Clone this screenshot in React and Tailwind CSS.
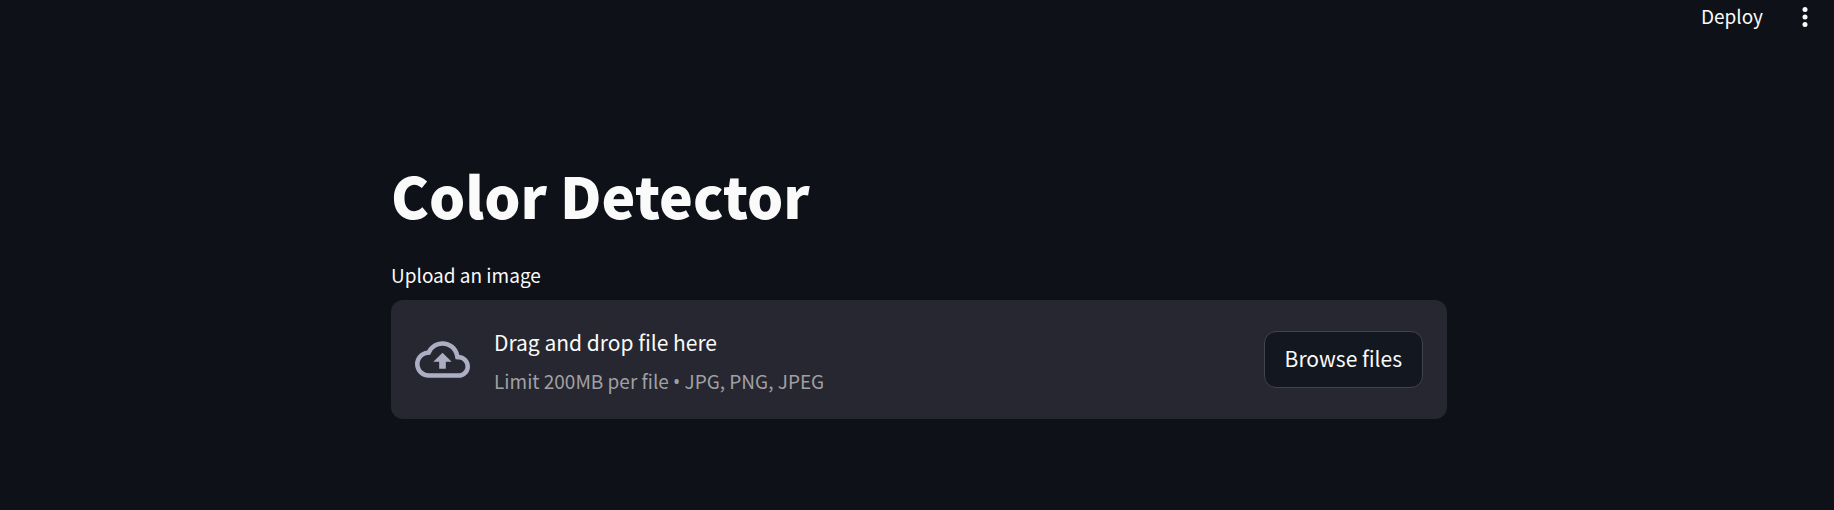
function MoreIcon() {
  return (
    <svg viewBox="0 0 24 24" className="size-[30px]" fill="currentColor" aria-hidden="true">
      <circle cx="12" cy="6" r="2" />
      <circle cx="12" cy="12" r="2" />
      <circle cx="12" cy="18" r="2" />
    </svg>
  );
}

function CloudUploadIcon() {
  return (
    <svg viewBox="0 0 24 24" className="size-[55px] shrink-0 text-[#acafc4]" fill="currentColor" aria-hidden="true">
      <path d="M19.35 10.04A7.49 7.49 0 0012 4C9.11 4 6.6 5.64 5.35 8.04A5.994 5.994 0 000 14c0 3.31 2.69 6 6 6h13c2.76 0 5-2.24 5-5 0-2.64-2.05-4.78-4.65-4.96zM19 18H6c-2.21 0-4-1.79-4-4 0-2.05 1.53-3.76 3.56-3.97l1.07-.11.5-.95A5.469 5.469 0 0112 6c2.62 0 4.88 1.86 5.39 4.43l.3 1.5 1.53.11A2.98 2.98 0 0122 15c0 1.65-1.35 3-3 3zM8 13h2.55v3h2.9v-3H16l-4-4z" />
    </svg>
  );
}

function Header() {
  return (
    <header className="flex items-center justify-end gap-[23px] pr-3.5 pt-0.5">
      <button type="button" className="px-1 pb-0.5 text-[19px] leading-7">Deploy</button>
      <button type="button" aria-label="Main menu">
        <MoreIcon />
      </button>
    </header>
  );
}

function FileUploader() {
  return (
    <section className="flex flex-col gap-2.5">
      <span id="upload-label" className="text-[19px] leading-[30px]">Upload an image</span>
      <div
        role="group"
        aria-labelledby="upload-label"
        className="flex items-center gap-6 rounded-xl bg-[#262730] p-6"
      >
        <CloudUploadIcon />
        <div className="flex grow flex-col gap-[9px] pt-0.5">
          <span className="text-[21px] leading-8">Drag and drop file here</span>
          <span className="text-[19px] leading-7 text-[#a0a0a4]">
            Limit 200MB per file <span className="font-['Noto_Sans',sans-serif] leading-none">•</span> JPG, PNG, JPEG
          </span>
        </div>
        <button
          type="button"
          className="rounded-xl border border-[#41444c] bg-[#131720] px-5 pb-[13px] pt-2.5 text-[21px] leading-8"
        >
          Browse files
        </button>
      </div>
    </section>
  );
}

export default function App() {
  return (
    <div className="min-h-screen bg-[#0e1117] font-['Noto_Sans_CJK_SC','Noto_Sans',sans-serif] text-[#fafafa]">
      <Header />
      <main className="pb-20 pl-1 pt-[122px]">
        <div className="mx-auto w-full max-w-[1056px]">
          <h1 className="mb-[26px] text-[57px] font-black leading-20">Color Detector</h1>
          <FileUploader />
        </div>
      </main>
    </div>
  );
}
